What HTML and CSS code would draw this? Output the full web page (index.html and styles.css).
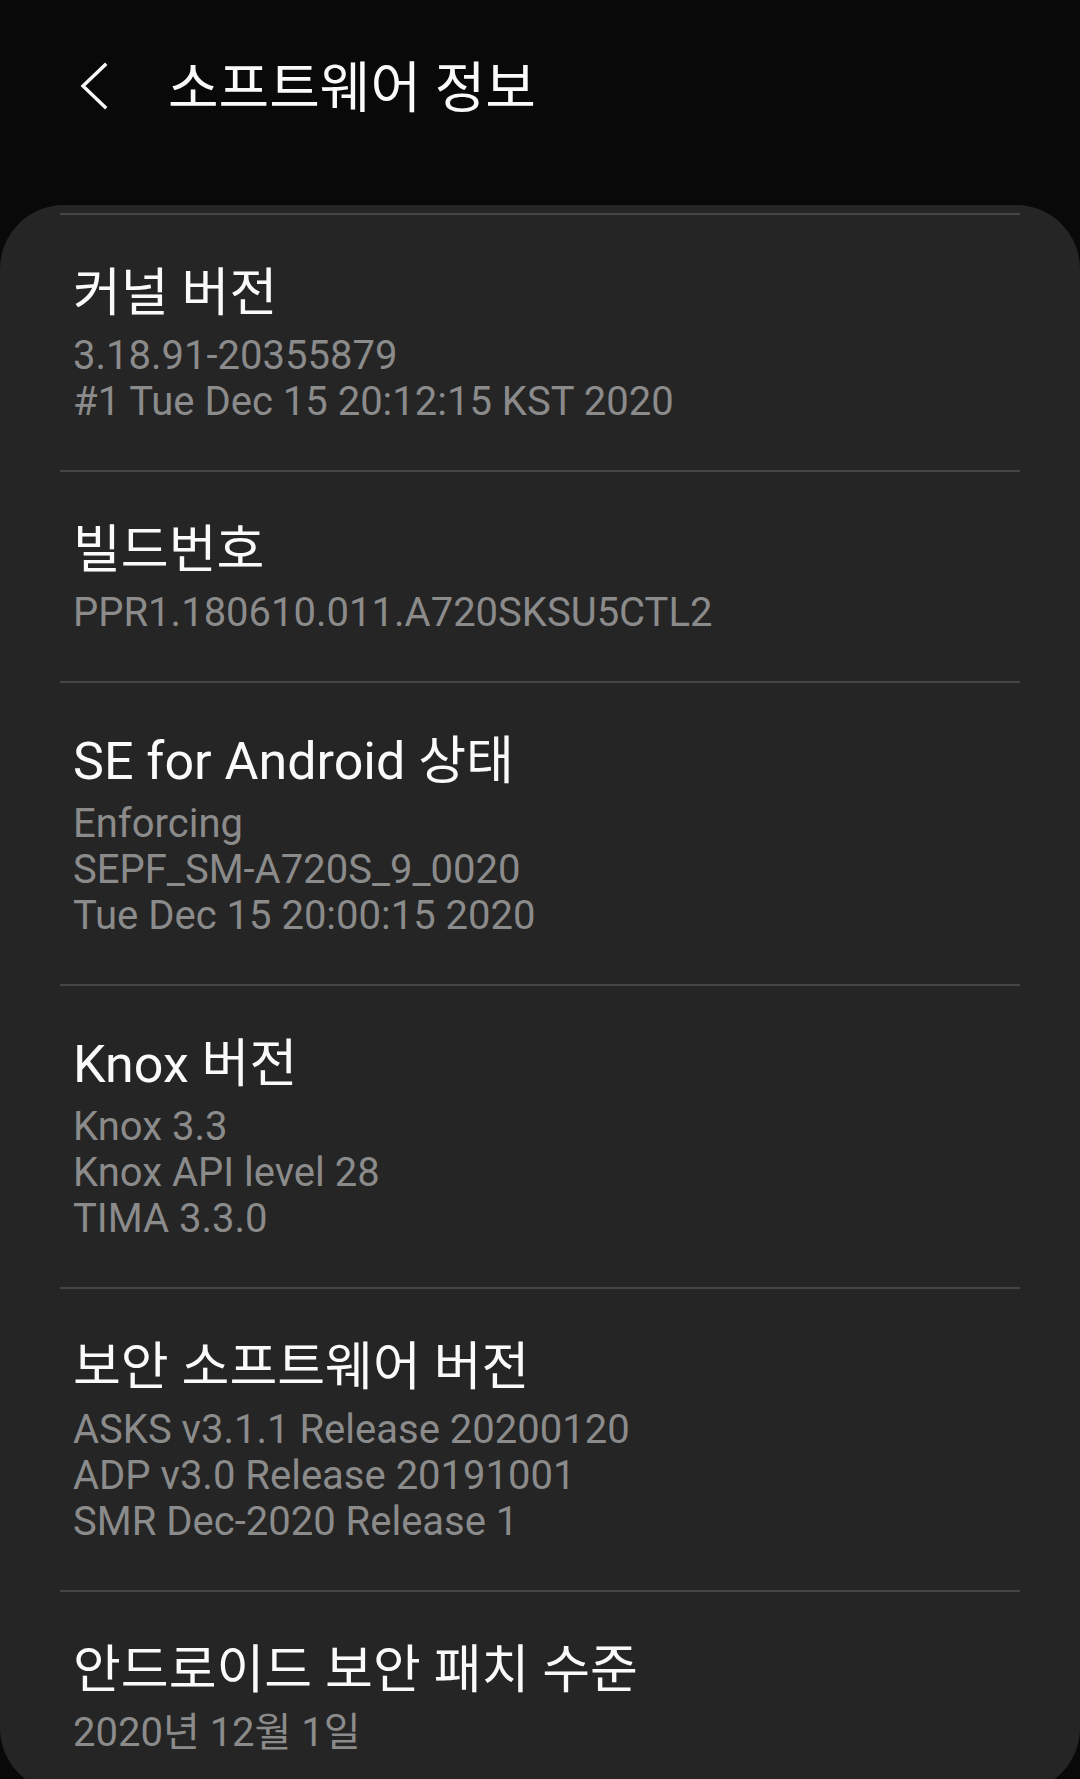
FILE: index.html
```html
<!DOCTYPE html>
<html lang="ko">
<head>
    <meta charset="UTF-8">
    <meta name="viewport" content="width=device-width, initial-scale=1.0">
    <title>소프트웨어 정보</title>
    <link rel="stylesheet" href="styles.css">
</head>
<body>

    <div class="header">
        <button class="back-btn" aria-label="뒤로">
            <svg width="30" height="48" viewBox="0 0 30 48">
                <path d="M26 3 L4 24 L26 45" fill="none" stroke="#fafafa" stroke-width="3.4" stroke-linecap="square"/>
            </svg>
        </button>
        <h1>소프트웨어 정보</h1>
    </div>

    <div class="card">
        <div class="item">
            <div class="title">커널 버전</div>
            <div class="sub">3.18.91-20355879</div>
            <div class="sub">#1 Tue Dec 15 20:12:15 KST 2020</div>
        </div>
        <div class="item">
            <div class="title">빌드번호</div>
            <div class="sub">PPR1.180610.011.A720SKSU5CTL2</div>
        </div>
        <div class="item">
            <div class="title">SE for Android 상태</div>
            <div class="sub">Enforcing</div>
            <div class="sub">SEPF_SM-A720S_9_0020</div>
            <div class="sub">Tue Dec 15 20:00:15 2020</div>
        </div>
        <div class="item">
            <div class="title">Knox 버전</div>
            <div class="sub">Knox 3.3</div>
            <div class="sub">Knox API level 28</div>
            <div class="sub">TIMA 3.3.0</div>
        </div>
        <div class="item">
            <div class="title">보안 소프트웨어 버전</div>
            <div class="sub">ASKS v3.1.1 Release 20200120</div>
            <div class="sub">ADP v3.0 Release 20191001</div>
            <div class="sub">SMR Dec-2020 Release 1</div>
        </div>
        <div class="item">
            <div class="title">안드로이드 보안 패치 수준</div>
            <div class="sub">2020년 12월 1일</div>
        </div>
    </div>

</body>
</html>
```

FILE: styles.css
```css
* {
    margin: 0;
    padding: 0;
    box-sizing: border-box;
    font-family: Roboto, "Noto Sans CJK KR", sans-serif;
}

body {
    background: #090909;
    color: #fafafa;
}

.header {
    display: flex;
    align-items: center;
    height: 205px;
    padding: 56px 0 0 79px;
    align-content: flex-start;
    flex-wrap: wrap;
}

.back-btn {
    display: flex;
    width: 30px;
    height: 48px;
    margin-top: -4px;
    margin-right: 59px;
    background: none;
    border: none;
}

.header h1 {
    font-size: 55px;
    font-weight: 400;
    line-height: 64px;
}

.card {
    background: #252525;
    border-radius: 64px;
    padding-top: 8px;
}

.item {
    margin: 0 60px;
    padding: 47px 0 45px 13px;
    border-top: 2px solid #454545;
}

.item:last-child {
    padding-bottom: 36px;
}

.title {
    font-size: 52px;
    line-height: 64px;
    margin-bottom: 7px;
    color: #fafafa;
}

.sub {
    font-size: 40px;
    line-height: 46px;
    color: #8b8b8b;
}
```
